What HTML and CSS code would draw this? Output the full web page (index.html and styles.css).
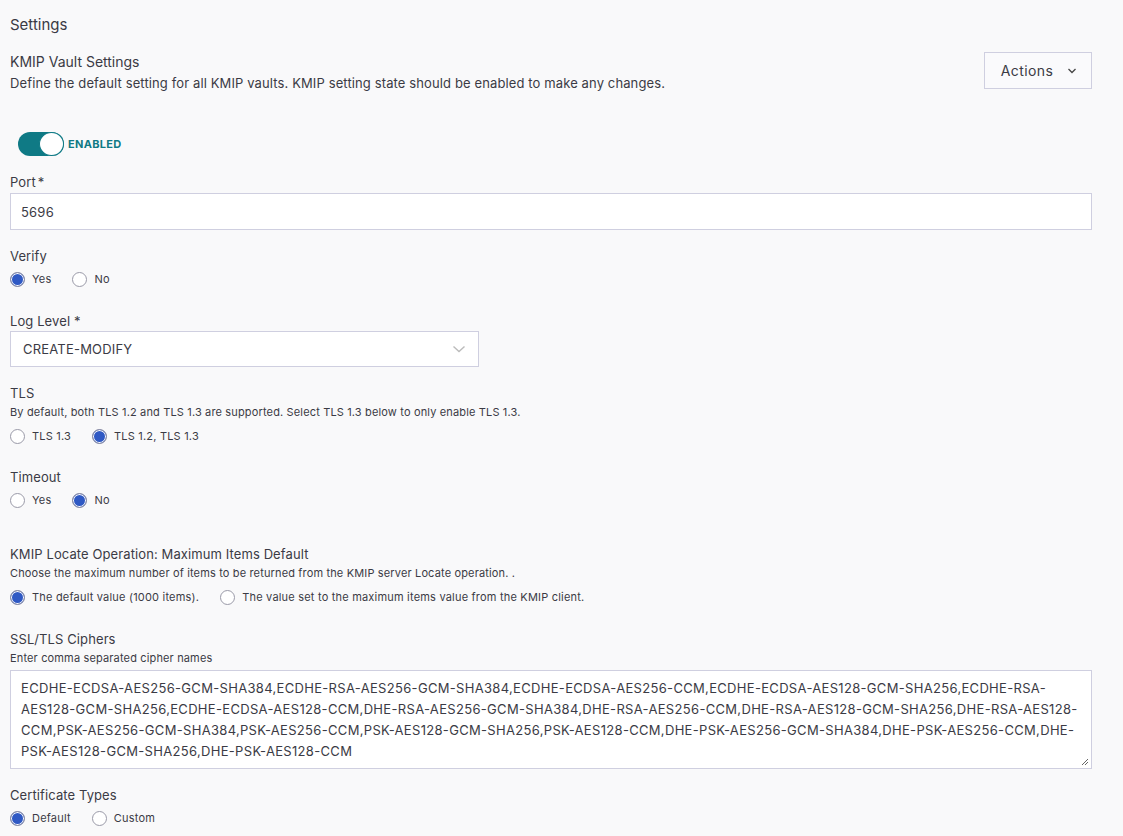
FILE: index.html
```html
<!DOCTYPE html>
<html lang="en">
<head>
<meta charset="utf-8">
<title>Settings</title>
<link rel="stylesheet" href="styles.css">
</head>
<body>
<div class="page">
  <h1 class="title">Settings</h1>
  <div class="header-row">
    <div class="header-text">
      <div class="section-title">KMIP Vault Settings</div>
      <div class="section-desc">Define the default setting for all KMIP vaults. KMIP setting state should be enabled to make any changes.</div>
    </div>
    <button class="actions-btn">Actions
      <svg class="chev" width="10" height="6" viewBox="0 0 10 6"><path d="M1.5 1l3.5 3.5L8.5 1" fill="none" stroke="#444" stroke-width="1.3"/></svg>
    </button>
  </div>

  <div class="toggle-row">
    <span class="toggle"><span class="knob"></span></span>
    <span class="toggle-label">ENABLED</span>
  </div>

  <div class="field">
    <div class="label">Port<span class="req">*</span></div>
    <div class="input">5696</div>
  </div>

  <div class="field">
    <div class="label">Verify</div>
    <div class="radios">
      <span class="radio checked"></span><span class="rlabel">Yes</span>
      <span class="radio"></span><span class="rlabel">No</span>
    </div>
  </div>

  <div class="field">
    <div class="label">Log Level *</div>
    <div class="select">CREATE-MODIFY
      <svg class="sel-chev" width="14" height="8" viewBox="0 0 14 8"><path d="M1.5 1.5l5.5 5 5.5-5" fill="none" stroke="#bbb" stroke-width="1.4"/></svg>
    </div>
  </div>

  <div class="field">
    <div class="label">TLS</div>
    <div class="help">By default, both TLS 1.2 and TLS 1.3 are supported. Select TLS 1.3 below to only enable TLS 1.3.</div>
    <div class="radios after-help tight">
      <span class="radio"></span><span class="rlabel">TLS 1.3</span>
      <span class="radio checked"></span><span class="rlabel">TLS 1.2, TLS 1.3</span>
    </div>
  </div>

  <div class="field">
    <div class="label">Timeout</div>
    <div class="radios">
      <span class="radio"></span><span class="rlabel">Yes</span>
      <span class="radio checked"></span><span class="rlabel">No</span>
    </div>
  </div>

  <div class="field locate">
    <div class="label">KMIP Locate Operation: Maximum Items Default</div>
    <div class="help">Choose the maximum number of items to be returned from the KMIP server Locate operation. .</div>
    <div class="radios after-help">
      <span class="radio checked"></span><span class="rlabel">The default value (1000 items).</span>
      <span class="radio"></span><span class="rlabel">The value set to the maximum items value from the KMIP client.</span>
    </div>
  </div>

  <div class="field">
    <div class="label">SSL/TLS Ciphers</div>
    <div class="help">Enter comma separated cipher names</div>
    <div class="textarea">ECDHE-ECDSA-AES256-GCM-SHA384,ECDHE-RSA-AES256-GCM-SHA384,ECDHE-ECDSA-AES256-CCM,ECDHE-ECDSA-AES128-GCM-SHA256,ECDHE-RSA-AES128-GCM-SHA256,ECDHE-ECDSA-AES128-CCM,DHE-RSA-AES256-GCM-SHA384,DHE-RSA-AES256-CCM,DHE-RSA-AES128-GCM-SHA256,DHE-RSA-AES128-CCM,PSK-AES256-GCM-SHA384,PSK-AES256-CCM,PSK-AES128-GCM-SHA256,PSK-AES128-CCM,DHE-PSK-AES256-GCM-SHA384,DHE-PSK-AES256-CCM,DHE-PSK-AES128-GCM-SHA256,DHE-PSK-AES128-CCM
      <svg class="grip" width="8" height="8" viewBox="0 0 8 8"><path d="M7 1L1 7M7 4L4 7" stroke="#666" stroke-width="1"/></svg>
    </div>
  </div>

  <div class="field">
    <div class="label">Certificate Types</div>
    <div class="radios">
      <span class="radio checked"></span><span class="rlabel">Default</span>
      <span class="radio"></span><span class="rlabel">Custom</span>
    </div>
  </div>
</div>
</body>
</html>
```
FILE: styles.css
```css
html, body {
  margin: 0;
  padding: 0;
  background: #f9f9fa;
}
body {
  font-family: Inter, "Noto Sans", sans-serif;
  color: #3b3b45;
}
.page {
  padding: 15px 31px 0 10px;
}
.title {
  font-size: 15px;
  font-weight: 400;
  margin: 0;
  line-height: 20px;
  color: #3a3a44;
}
.header-row {
  display: flex;
  justify-content: space-between;
  align-items: flex-start;
  margin-top: 17px;
}
.section-title {
  font-size: 14px;
  line-height: 20px;
}
.section-desc {
  font-size: 13px;
  line-height: 20px;
  margin-top: 1px;
  letter-spacing: 0.12px;
}
.actions-btn {
  font-family: inherit;
  font-size: 14px;
  color: #3b3b45;
  background: #fafafc;
  border: 1px solid #cfcfe0;
  height: 37px;
  width: 108px;
  margin-top: 0;
  display: flex;
  align-items: center;
  justify-content: center;
  gap: 14px;
  padding: 0 4px 0 6px;
  letter-spacing: 0.4px;
}
.toggle-row {
  display: flex;
  align-items: center;
  margin-top: 39px;
  padding-left: 8px;
}
.toggle {
  width: 46px;
  height: 24px;
  border-radius: 12px;
  background: #0f7a85;
  position: relative;
  box-sizing: border-box;
}
.knob {
  position: absolute;
  right: 0;
  top: 0;
  width: 25px;
  height: 24px;
  border-radius: 50%;
  background: #fff;
  border: 1px solid #0f7a85;
  box-sizing: border-box;
}
.toggle-label {
  font-size: 11px;
  font-weight: 700;
  color: #0f7a85;
  margin-left: 4px;
  letter-spacing: 0.3px;
}
.field {
  display: flow-root;
  margin-top: 17px;
}
.label {
  font-size: 13px;
  line-height: 18px;
  letter-spacing: 0.1px;
}
.req {
  margin-left: 2px;
}
.input {
  margin-top: 2px;
  height: 37px;
  box-sizing: border-box;
  border: 1px solid #cfcfe0;
  background: #fff;
  font-size: 13px;
  padding: 0 10px;
  display: flex;
  align-items: center;
  letter-spacing: 0.2px;
}
.select {
  margin-top: 1px;
  width: 469px;
  height: 36px;
  box-sizing: border-box;
  border: 1px solid #cfcfe0;
  background: #fff;
  font-size: 13px;
  padding: 0 12px 0 12px;
  display: flex;
  align-items: center;
  justify-content: space-between;
  letter-spacing: 0.2px;
}
.help {
  font-size: 11px;
  line-height: 16px;
  margin-top: 2px;
  letter-spacing: 0.15px;
}
.radios {
  display: flex;
  align-items: center;
  margin-top: 5px;
  margin-bottom: 7px;
  height: 18px;
}
.radios.after-help {
  margin-top: 7px;
}
.radios.tight {
  margin-bottom: 6px;
}
.radio {
  width: 15px;
  height: 15px;
  border-radius: 50%;
  border: 1px solid #9a9aa8;
  box-sizing: border-box;
  background: #fff;
  flex: none;
}
.radio.checked {
  background: #2f59c4;
  box-shadow: inset 0 0 0 1px #fff;
  border-color: #8c8ca0;
}
.rlabel {
  font-size: 11px;
  margin-left: 7px;
  margin-right: 21px;
  letter-spacing: 0.2px;
}
.locate {
  margin-top: 29px;
}
.textarea {
  position: relative;
  margin-top: 4px;
  height: 99px;
  box-sizing: border-box;
  border: 1px solid #cfcfe0;
  background: #fff;
  font-size: 13px;
  line-height: 21px;
  padding: 7px 10px;
  letter-spacing: 0.32px;
}
.grip {
  position: absolute;
  right: 2px;
  bottom: 2px;
}
```
